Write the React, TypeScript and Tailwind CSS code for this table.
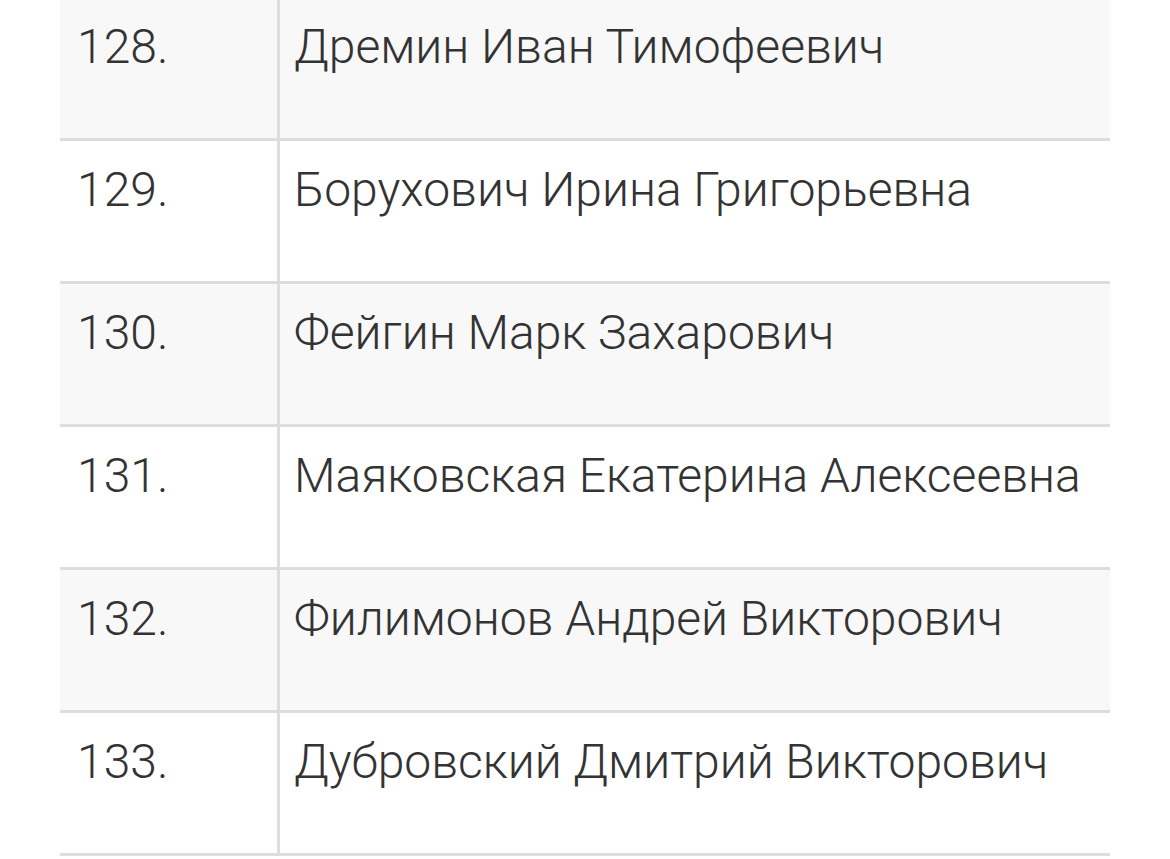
const rows = [
  { n: '128.', name: 'Дремин Иван Тимофеевич' },
  { n: '129.', name: 'Борухович Ирина Григорьевна' },
  { n: '130.', name: 'Фейгин Марк Захарович' },
  { n: '131.', name: 'Маяковская Екатерина Алексеевна' },
  { n: '132.', name: 'Филимонов Андрей Викторович' },
  { n: '133.', name: 'Дубровский Дмитрий Викторович' },
]

export default function App() {
  return (
    <div
      className="w-[1170px] h-[859px] overflow-hidden bg-white text-[#333333]"
      style={{ fontFamily: 'Roboto, "Noto Sans", sans-serif' }}
    >
      <div className="ml-[60px] w-[1050px] -mt-[2px]">
        {rows.map((r, i) => (
          <div
            key={r.n}
            className={`flex h-[143px] border-b-[3px] border-[#dddddd] ${
              i % 2 === 0 ? 'bg-[#f8f8f8]' : 'bg-white'
            }`}
          >
            <div className="w-[220px] shrink-0 border-r-[3px] border-[#dddddd] pl-[17px] pt-[21px] text-[48px] font-light leading-[56px]">
              {r.n}
            </div>
            <div className="flex-1 pl-[14px] pt-[21px] text-[48px] font-light leading-[56px] whitespace-nowrap">
              {r.name}
            </div>
          </div>
        ))}
      </div>
    </div>
  )
}
